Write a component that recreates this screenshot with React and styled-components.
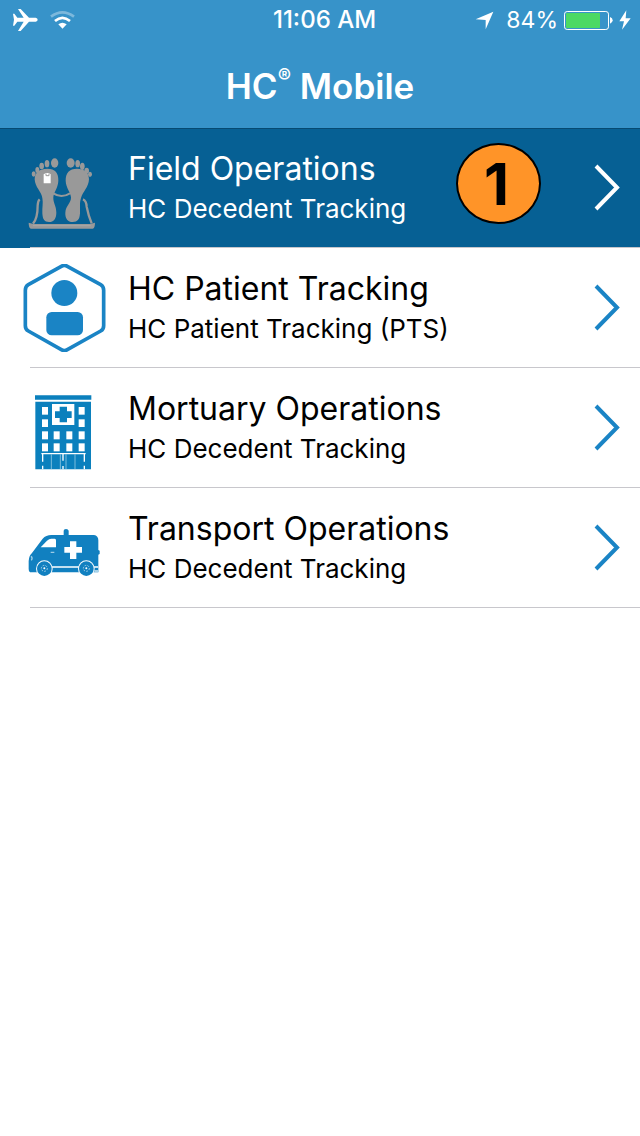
import React from "react";
import styled, { createGlobalStyle } from "styled-components";

const GlobalStyle = createGlobalStyle`
  *, *::before, *::after { box-sizing: border-box; }
  body {
    margin: 0;
    background: #fff;
    color: #000;
    font-family: Inter, "Liberation Sans", sans-serif;
  }
`;

const Header = styled.header`
  position: relative;
  z-index: 1;
  background: #3793c9;
  color: #fff;
  box-shadow: 0 1px 0 #064a72;
`;

const StatusBar = styled.div`
  display: grid;
  grid-template-columns: 1fr auto 1fr;
  align-items: center;
  height: 40px;
  padding: 0 9px 0 12px;
`;

const StatusGroup = styled.div`
  display: flex;
  align-items: center;
  justify-content: ${({ $end }) => ($end ? "flex-end" : "flex-start")};
  gap: ${({ $end }) => ($end ? 6 : 12)}px;
  line-height: 40px;
`;

const Clock = styled.time`
  padding-left: 6px;
  font-size: 24px;
  font-weight: 500;
  line-height: 40px;
`;

const Percent = styled.span`
  padding-left: 6px;
  font-size: 23px;
`;

const Title = styled.h1`
  margin: 0;
  padding-top: 4px;
  font-size: 35px;
  font-weight: 600;
  line-height: 84px;
  text-align: center;
`;

const Mark = styled.sup`
  font-size: 20px;
  line-height: 0;
  vertical-align: 16px;
`;

const List = styled.ul`
  margin: 0;
  padding: 0;
  list-style: none;
`;

const Item = styled.li`
  position: relative;

  &::after {
    content: "";
    position: absolute;
    right: 0;
    bottom: 0;
    left: 30px;
    height: 1px;
    background: #c8c7cc;
  }
`;

const Row = styled.button`
  display: flex;
  align-items: center;
  width: 100%;
  min-height: 120px;
  padding: 0 19px 0 0;
  border: 0;
  background: ${({ $active }) => ($active ? "#066094" : "#fff")};
  color: ${({ $active }) => ($active ? "#fff" : "#000")};
  font-family: inherit;
  text-align: left;
  cursor: pointer;
`;

const IconCell = styled.span`
  display: flex;
  flex: none;
  justify-content: center;
  width: 128px;
`;

const Labels = styled.span`
  display: flex;
  flex: 1;
  flex-direction: column;
  gap: 4px;
  min-width: 0;
  padding-bottom: 2px;
`;

const Name = styled.span`
  font-size: 32px;
  line-height: 40px;
`;

const Detail = styled.span`
  font-size: 26px;
  line-height: 32px;
`;

const Badge = styled.span`
  position: absolute;
  top: 15px;
  right: 99px;
  width: 85px;
  height: 81px;
  padding-right: 4px;
  border: 2px solid #000;
  border-radius: 50%;
  background: #ff9428;
  color: #000;
  font-size: 58px;
  font-weight: 700;
  line-height: 78px;
  text-align: center;
`;

const ChevronSvg = styled.svg`
  flex: none;
  color: ${({ $active }) => ($active ? "#fff" : "#1a84c5")};
`;

const Plane = () => (
  <svg width="26" height="24" viewBox="0 0 78 72" fill="#fff" role="img" aria-label="Airplane mode">
    <path d="M3 17h4l9 12h19L18 3h8l25 26h20q6 2 6 6t-6 6H51L26 69h-8l17-28H16L7 53H3l3-18z" />
  </svg>
);

const Wifi = () => (
  <svg width="25" height="20" viewBox="0 0 75 60" fill="none" role="img" aria-label="Wi-Fi">
    <path d="M3 20Q37-6 72 20" stroke="#fff" strokeOpacity="0.35" strokeWidth="8" />
    <path d="M15 33Q37 14 60 33" stroke="#fff" strokeWidth="8" />
    <path d="M25 43Q37 33 50 43L37.500 56z" fill="#fff" />
  </svg>
);

const Locate = () => (
  <svg width="19" height="19" viewBox="0 0 57 57" fill="#fff" role="img" aria-label="Location in use">
    <path d="M55 2L32 55V27L2 25z" />
  </svg>
);

const Battery = () => (
  <svg width="49" height="20" viewBox="0 0 147 60" role="img" aria-label="Battery charging">
    <rect x="1.500" y="4.500" width="132" height="54" rx="8" fill="none" stroke="#fff" strokeWidth="3" />
    <rect x="6" y="9" width="102" height="45" rx="2" fill="#4cd964" />
    <path d="M138 21q8 2 8 10t-8 10z" fill="#fff" />
  </svg>
);

const Bolt = () => (
  <svg width="12" height="20" viewBox="0 0 36 60" fill="#fff" aria-hidden="true">
    <path d="M22 1L1 34h14l-6 25 26-34H20z" />
  </svg>
);

const Chevron = ({ active }) => (
  <ChevronSvg $active={active} width="28" height="48" viewBox="0 0 28 48" fill="none" aria-hidden="true">
    <path d="M3 2L24 23.500L3 45" stroke="currentColor" strokeWidth="4" />
  </ChevronSvg>
);

const FeetIcon = () => (
  <svg width="88" height="88" viewBox="15 72 264 264" fill="#999" aria-hidden="true">
    <path d="M59 178C59 157 74 146 97 146C120 146 131 158 130 182C129 205 116 216 115 232C114 248 124 258 124 278C124 296 116 306 102 306C88 306 83 298 82 280C81 262 85 250 82 234C79 214 60 202 59 178z" />
    <path d="M222 178C222 157 207 146 186 146C163 146 152 158 152 182C153 205 167 216 168 232C169 248 152 258 151 278C150 296 159 306 173 306C188 306 194 298 195 280C196 262 193 250 198 234C204 214 221 202 222 178z" />
    <ellipse cx="119" cy="129" rx="11" ry="14" />
    <ellipse cx="96" cy="131" rx="7" ry="11" />
    <ellipse cx="80" cy="138" rx="7" ry="10" />
    <ellipse cx="67" cy="150" rx="6" ry="9" />
    <ellipse cx="56" cy="162" rx="6" ry="8" />
    <ellipse cx="167" cy="129" rx="12" ry="14" />
    <ellipse cx="188" cy="131" rx="7" ry="11" />
    <ellipse cx="202" cy="139" rx="7" ry="11" />
    <ellipse cx="215" cy="152" rx="7" ry="9" />
    <ellipse cx="225" cy="163" rx="6" ry="8" />
    <path d="M86 163q11-8 21 0v27H86z" fill="#fff" />
    <path d="M93 161v6h9v-6" fill="none" stroke="#999" strokeWidth="3" />
    <path d="M115 220q24 16 50 0" fill="none" stroke="#999" strokeWidth="6" />
    <path d="M74 238q-5 4-6 18q0 40-14 55M204 238q10 4 11 22q5 26 15 50" fill="none" stroke="#999" strokeWidth="7" />
    <path d="M41 308l14 4h170l15-4q0 17-7 18H48q-7-1-7-18z" />
    <path d="M54 317h173" stroke="#a8a8a8" strokeWidth="3" />
  </svg>
);

const PatientIcon = () => (
  <svg width="88" height="88" viewBox="15 27 264 264" fill="#1a84c5" aria-hidden="true">
    <path
      d="M139 34Q148 29 157 34L257 89Q266 94 266 106V212Q266 223 257 228L157 284Q148 289 139 284L40 228Q31 223 31 212V106Q31 94 40 89z"
      fill="none"
      stroke="#1a84c5"
      strokeWidth="11"
    />
    <circle cx="148" cy="114" r="39" />
    <rect x="94" y="171" width="110" height="70" rx="16" />
  </svg>
);

const windowColumns = [81, 116, 154, 191];

const HospitalIcon = () => (
  <svg width="88" height="88" viewBox="15 12 264 264" fill="#0b80bd" aria-hidden="true">
    <path d="M60 46h169v13H60zM61 65h167v203H61z" />
    <path d="M111 72h67v63h-67z" fill="#fff" />
    <path d="M134 80h22v14h14v20h-14v13h-22v-13h-14V94h14z" />
    <g fill="#fff">
      {[81, 118].map((y) => (
        <React.Fragment key={y}>
          <rect x="81" y={y} width="18" height="23" />
          <rect x="191" y={y} width="18" height="23" />
        </React.Fragment>
      ))}
      {[154, 190].map((y) =>
        windowColumns.map((x) => <rect key={`${x}-${y}`} x={x} y={y} width="18" height="24" />)
      )}
    </g>
    <path d="M79 221h133M83 223v22M83 257v11M144 220v22M144 258v10M208 223v22M208 257v11" fill="none" stroke="#fff" strokeWidth="4" />
    <path d="M109 223v45M180 223v45M136 223v45M153 223v45" fill="none" stroke="#b5dbed" strokeWidth="2" />
  </svg>
);

const Wheel = ({ x }) => (
  <g>
    <circle cx={x} cy="161" r="25" fill="#fff" />
    <circle cx={x} cy="161" r="22" />
    <circle cx={x} cy="160" r="9" fill="none" stroke="#a9d3e9" strokeWidth="3" strokeDasharray="5 4" />
    <circle cx={x} cy="160" r="3" fill="#fff" />
  </g>
);

const VanIcon = () => (
  <svg width="88" height="88" viewBox="15 -33 264 264" fill="#1180c0" aria-hidden="true">
    <path d="M146 60V47q0-5 7-5t8 5v13h76q13 2 13 16v29l4 2v10l-4 2v53H45q-4-2-4-10v-24q1-16 10-24L83 71q10-11 26-11z" />
    <path d="M77 97l19-20q6-6 13-6h10q4 0 4 5v21z" fill="#fff" />
    <path d="M165 79h19v17h17v17h-17v19h-19v-19h-17V96h17z" fill="#fff" />
    <path d="M107 112h11M48 124q6 5 1 12" fill="none" stroke="#9bcbe5" strokeWidth="4" />
    <path d="M106 156h90M231 156h18" stroke="#fff" strokeWidth="4" />
    <path d="M238 165h12v6h-12z" fill="#a9d3e9" />
    <Wheel x={88} />
    <Wheel x={214} />
  </svg>
);

const modules = [
  { name: "Field Operations", detail: "HC Decedent Tracking", Icon: FeetIcon, active: true, badge: "1" },
  { name: "HC Patient Tracking", detail: "HC Patient Tracking (PTS)", Icon: PatientIcon },
  { name: "Mortuary Operations", detail: "HC Decedent Tracking", Icon: HospitalIcon },
  { name: "Transport Operations", detail: "HC Decedent Tracking", Icon: VanIcon },
];

export default function App() {
  return (
    <>
      <GlobalStyle />
      <Header>
        <StatusBar>
          <StatusGroup>
            <Plane />
            <Wifi />
          </StatusGroup>
          <Clock>11:06 AM</Clock>
          <StatusGroup $end>
            <Locate />
            <Percent>84%</Percent>
            <Battery />
            <Bolt />
          </StatusGroup>
        </StatusBar>
        <Title>
          HC<Mark>®</Mark> Mobile
        </Title>
      </Header>
      <main>
        <List>
          {modules.map(({ name, detail, Icon, active, badge }) => (
            <Item key={name}>
              <Row type="button" $active={active} aria-current={active ? "true" : undefined}>
                <IconCell>
                  <Icon />
                </IconCell>
                <Labels>
                  <Name>{name}</Name>
                  <Detail>{detail}</Detail>
                </Labels>
                {badge && <Badge>{badge}</Badge>}
                <Chevron active={active} />
              </Row>
            </Item>
          ))}
        </List>
      </main>
    </>
  );
}
